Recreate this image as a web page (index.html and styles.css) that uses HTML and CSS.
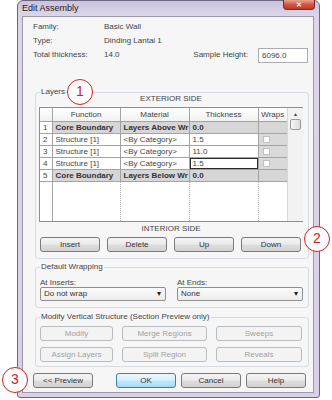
FILE: index.html
```html
<!DOCTYPE html>
<html>
<head>
<meta charset="utf-8">
<link rel="stylesheet" href="styles.css">
</head>
<body>
<div class="page">
  <div class="window">
    <div class="titlebar">
      <span class="title">Edit Assembly</span>
      <span class="close">&#x2715;</span>
    </div>
    <div class="client">
      <div class="props">
        <div class="prop-row"><span class="plabel">Family:</span><span>Basic Wall</span></div>
        <div class="prop-row"><span class="plabel">Type:</span><span>Dinding Lantai 1</span></div>
        <div class="prop-row">
          <span class="plabel">Total thickness:</span><span class="grow">14.0</span>
          <span class="sh-label">Sample Height:</span>
          <span class="input">6096.0</span>
        </div>
      </div>

      <div class="group layers">
        <span class="glabel">Layers</span>
        <div class="side">EXTERIOR SIDE</div>
        <div class="grid-wrap">
          <table class="grid">
            <colgroup>
              <col class="c-num"><col class="c-fn"><col class="c-mat"><col class="c-th"><col class="c-wr">
            </colgroup>
            <tr class="head"><th></th><th>Function</th><th>Material</th><th>Thickness</th><th>Wraps</th></tr>
            <tr class="core"><td class="num">1</td><td>Core Boundary</td><td>Layers Above Wr</td><td>0.0</td><td class="wr"></td></tr>
            <tr><td class="num">2</td><td>Structure [1]</td><td>&lt;By Category&gt;</td><td>1.5</td><td class="wr"><span class="chk"></span></td></tr>
            <tr><td class="num">3</td><td>Structure [1]</td><td>&lt;By Category&gt;</td><td>11.0</td><td class="wr"><span class="chk"></span></td></tr>
            <tr><td class="num">4</td><td>Structure [1]</td><td>&lt;By Category&gt;</td><td class="sel">1.5</td><td class="wr"><span class="chk"></span></td></tr>
            <tr class="core"><td class="num">5</td><td>Core Boundary</td><td>Layers Below Wr</td><td>0.0</td><td class="wr"></td></tr>
            <tr class="filler"><td class="num"></td><td></td><td></td><td></td><td></td></tr>
          </table>
          <div class="scroll">
            <div class="sarrow">&#x25B4;</div>
            <div class="thumb"></div>
          </div>
        </div>
        <div class="side">INTERIOR SIDE</div>
        <div class="btnrow4">
          <span class="btn">Insert</span>
          <span class="btn">Delete</span>
          <span class="btn">Up</span>
          <span class="btn">Down</span>
        </div>
      </div>

      <div class="group wrapping">
        <span class="glabel">Default Wrapping</span>
        <div class="wrap-grid">
          <div class="field">
            <span class="flabel">At Inserts:</span>
            <span class="combo">Do not wrap<span class="arrow">&#x25BE;</span></span>
          </div>
          <div class="field">
            <span class="flabel">At Ends:</span>
            <span class="combo">None<span class="arrow">&#x25BE;</span></span>
          </div>
        </div>
      </div>

      <div class="group modify">
        <span class="glabel">Modify Vertical Structure (Section Preview only)</span>
        <div class="mod-grid">
          <span class="btn dis">Modify</span>
          <span class="btn dis">Merge Regions</span>
          <span class="btn dis">Sweeps</span>
          <span class="btn dis">Assign Layers</span>
          <span class="btn dis">Split Region</span>
          <span class="btn dis">Reveals</span>
        </div>
      </div>

      <div class="bottom">
        <span class="btn b-prev">&lt;&lt; Preview</span>
        <span class="btn ok">OK</span>
        <span class="btn">Cancel</span>
        <span class="btn">Help</span>
      </div>
    </div>
  </div>

  <span class="mark m1">1</span>
  <span class="mark m2">2</span>
  <span class="mark m3">3</span>
</div>
</body>
</html>
```
FILE: styles.css
```css
html, body {
  margin: 0;
  padding: 0;
  background: #ffffff;
}
body {
  font-family: "Liberation Sans", Arial, sans-serif;
  font-size: 8px;
  color: #444444;
}
.page {
  position: relative;
  width: 332px;
  height: 400px;
}
.window {
  position: relative;
  margin-left: 17px;
  width: 303px;
  height: 398px;
  box-sizing: border-box;
  border: 1px solid #6d6680;
  border-radius: 6px 6px 3px 3px;
  background: linear-gradient(180deg, #cbc2dd 0px, #dcd5e9 14px, #d8d0e6 100%);
  padding: 0 5px 4px 4px;
}
.titlebar {
  height: 15px;
  display: flex;
  align-items: center;
}
.title {
  font-size: 9px;
  color: #1a1a1a;
  margin-top: -1px;
}
.close {
  position: absolute;
  top: -1px;
  right: 4px;
  width: 32px;
  height: 10px;
  box-sizing: border-box;
  border: 1px solid #7c2c20;
  border-top: none;
  border-radius: 0 0 4px 4px;
  background: linear-gradient(180deg, #e8a597 0%, #d2563f 50%, #c03a24 100%);
  color: #fff;
  font-size: 7px;
  font-weight: bold;
  line-height: 9px;
  text-align: center;
}
.client {
  height: 377px;
  box-sizing: border-box;
  border: 1px solid #9c9aa4;
  background: #f6f6f6;
  padding: 3px 5px 0 10px;
}
.props {
  display: flex;
  flex-direction: column;
}
.prop-row {
  display: flex;
  align-items: center;
  height: 14px;
  line-height: 14px;
}
.plabel {
  width: 71px;
  flex: none;
}
.grow { flex: 1; }
.sh-label { margin-right: 10px; }
.input {
  width: 50px;
  height: 15px;
  box-sizing: border-box;
  border: 1px solid #abadb3;
  background: #fff;
  line-height: 13px;
  padding-left: 3px;
  margin-top: 1px;
}

.group {
  position: relative;
  border: 1px solid #d5dbe0;
  border-radius: 3px;
  margin-left: 2px;
  width: 274px;
  box-sizing: border-box;
}
.glabel {
  position: absolute;
  top: -6px;
  left: 4px;
  line-height: 10px;
  padding: 0 1px;
  background: #f6f6f6;
}
.layers {
  margin-top: 30px;
  padding: 0 0 6px 3px;
}
.side {
  width: 264px;
  text-align: center;
  line-height: 12px;
  height: 12px;
  margin-top: 1px;
}
.layers .side:first-of-type { margin-top: 0; }
.grid-wrap {
  margin-top: 2px;
  width: 264px;
  height: 115px;
  box-sizing: border-box;
  border: 1px solid #8d8f94;
  background: #fff;
  display: flex;
}
.grid {
  border-collapse: collapse;
  table-layout: fixed;
  width: 247px;
  height: 113px;
}
.c-num { width: 12px; }
.c-fn { width: 68px; }
.c-mat { width: 69px; }
.c-th { width: 69px; }
.c-wr { width: 29px; }
.grid th, .grid td {
  border: 1px solid #a3a3a3;
  padding: 0 0 0 3px;
  height: 11px;
  line-height: 11px;
  white-space: nowrap;
  overflow: hidden;
  text-align: left;
  font-weight: normal;
}
.grid tr:first-child th { border-top: none; }
.grid th:first-child, .grid td:first-child { border-left: none; }
.grid th:last-child, .grid td:last-child { border-right: none; }
.grid .head th {
  height: 13px;
  line-height: 13px;
  text-align: center;
  padding: 0;
  background: linear-gradient(180deg, #ffffff, #f1f1f1);
}
.grid td.num {
  padding: 0 0 0 3px;
  background: #fff;
}
.grid tr.core td {
  background: #d6d6d6;
  font-weight: bold;
  color: #333;
}
.grid tr.core td.num {
  background: #fff;
  font-weight: normal;
  color: #444;
}
.grid td.wr {
  background: #d9d9d9;
  padding: 0 0 0 4px;
}
.chk {
  display: block;
  width: 7px;
  height: 7px;
  background: #fff;
  border: 1px solid #c2c2c2;
  box-sizing: border-box;
}
.grid td.sel {
  box-shadow: inset 0 0 0 1px #2a2a2a;
}
.grid tr.filler td {
  height: auto;
  border-top: 1px solid #a3a3a3;
  border-bottom: none;
  border-left: 1px dotted #b5b5b5;
  border-right: 1px dotted #b5b5b5;
  background: #fff;
}
.grid tr.filler td.num {
  border-right: 1px solid #a3a3a3;
  border-left: none;
}
.grid tr.filler td:last-child { border-right: none; }
.scroll {
  width: 15px;
  flex: none;
  border-left: 1px solid #d8d8d8;
  background: #f2f2f2;
  display: flex;
  flex-direction: column;
  align-items: center;
}
.sarrow {
  height: 10px;
  line-height: 10px;
  font-size: 6px;
  color: #444;
  margin-top: 1px;
}
.thumb {
  width: 11px;
  height: 11px;
  box-sizing: border-box;
  border: 1px solid #9a9a9a;
  border-radius: 2px;
  background: linear-gradient(90deg, #f5f5f5, #dcdcdc);
}

.btn {
  display: flex;
  align-items: center;
  justify-content: center;
  height: 15px;
  box-sizing: border-box;
  border: 1px solid #7a7a7a;
  border-radius: 3px;
  background: linear-gradient(180deg, #f4f4f4 0%, #ececec 45%, #dddddd 55%, #d2d2d2 100%);
  color: #333;
  white-space: nowrap;
}
.btn.dis {
  border-color: #b8bcc0;
  background: #f3f3f3;
  color: #a2a2a2;
}
.btn.ok {
  border-color: #3c7fb1;
  background: linear-gradient(180deg, #eaf6fd 0%, #d9f0fc 45%, #bee6fd 55%, #a7d9f5 100%);
}
.btnrow4 {
  margin-top: 2px;
  margin-left: 1px;
  width: 261px;
  display: grid;
  grid-template-columns: repeat(4, 60px);
  column-gap: 7px;
}

.wrapping {
  margin-top: 8px;
  padding: 10px 0 6px 4px;
}
.wrap-grid {
  display: grid;
  grid-template-columns: 126px 126px;
  column-gap: 11px;
}
.field {
  display: flex;
  flex-direction: column;
}
.flabel {
  line-height: 9px;
  height: 9px;
}
.combo {
  position: relative;
  height: 14px;
  box-sizing: border-box;
  border: 1px solid #8e8f8f;
  border-radius: 2px;
  background: linear-gradient(180deg, #fbfbfb, #ececec);
  line-height: 12px;
  padding-left: 3px;
  color: #333;
}
.arrow {
  position: absolute;
  right: 4px;
  top: 0;
  font-size: 8px;
  line-height: 12px;
  color: #222;
}

.modify {
  margin-top: 9px;
  padding: 8px 0 4px 4px;
}
.mod-grid {
  display: grid;
  grid-template-columns: 73px 85px 86px;
  column-gap: 9px;
  row-gap: 6px;
}

.bottom {
  display: flex;
  margin-top: 6px;
  gap: 5px;
}
.bottom .btn { width: 60px; }
.bottom .b-prev { margin-right: 18px; }

.mark {
  position: absolute;
  width: 26px;
  height: 26px;
  box-sizing: border-box;
  border: 1.5px solid #d22020;
  border-radius: 50%;
  background: #fff;
  color: #d22020;
  font-size: 14px;
  line-height: 23px;
  text-align: center;
}
.m1 { left: 67px; top: 79px; }
.m2 { left: 304px; top: 226px; }
.m3 { left: 2px; top: 367px; }
```
